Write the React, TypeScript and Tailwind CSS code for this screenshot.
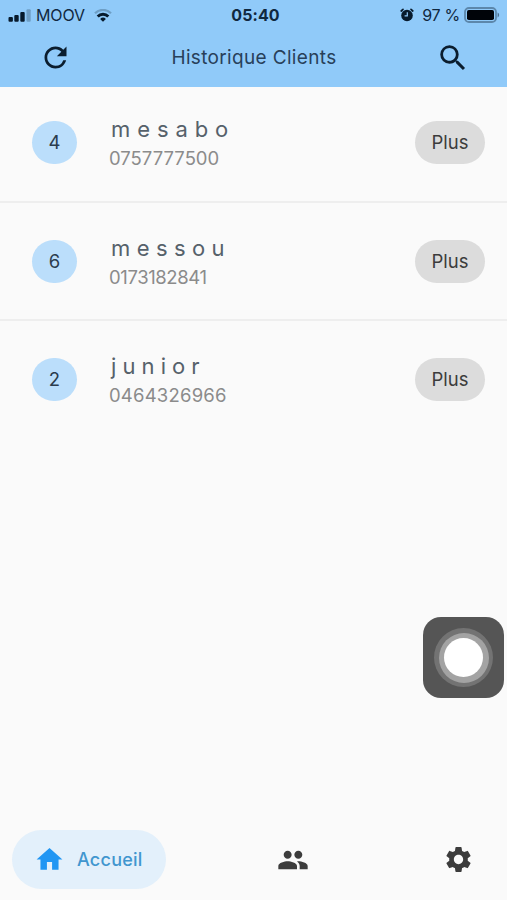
import { MdHome, MdPeople, MdRefresh, MdSearch, MdSettings } from 'react-icons/md';
import { clsx } from 'clsx';

type Client = {
  name: string;
  phone: string;
  count: number;
  nameClass: string;
  phoneClass: string;
};

const clients: Client[] = [
  {
    name: 'mesabo',
    phone: '0757777500',
    count: 4,
    nameClass: 'tracking-[6.9px]',
    phoneClass: 'tracking-[0px]',
  },
  {
    name: 'messou',
    phone: '0173182841',
    count: 6,
    nameClass: 'tracking-[6.4px]',
    phoneClass: 'tracking-[-0.4px]',
  },
  {
    name: 'junior',
    phone: '0464326966',
    count: 2,
    nameClass: 'tracking-[6.1px]',
    phoneClass: 'tracking-[0.2px]',
  },
];

function SignalIcon() {
  return (
    <svg width="23" height="13" viewBox="0 0 23 13" fill="#071a2c" aria-hidden="true">
      <rect x="0.5" y="8" width="4.4" height="4.8" rx="1" />
      <rect x="6.3" y="6" width="4.4" height="6.8" rx="1" />
      <rect x="12.3" y="3" width="4.4" height="9.8" rx="1" />
      <rect x="18.5" y="0.3" width="4.2" height="12.5" rx="1" opacity="0.25" />
    </svg>
  );
}

function WifiIcon() {
  return (
    <svg width="18" height="13" viewBox="0 0 18 13" aria-hidden="true">
      <path d="M9 12.8 6.1 9.9a4.1 4.1 0 0 1 5.8 0Z" fill="#071a2c" />
      <path d="M3.7 7.5a7.4 7.4 0 0 1 10.6 0" fill="none" stroke="#071a2c" strokeWidth="2.9" />
      <path d="M1 4.2a11.4 11.4 0 0 1 16 0" fill="none" stroke="#071a2c" strokeWidth="2.2" opacity="0.25" />
    </svg>
  );
}

function AlarmIcon() {
  return (
    <svg width="14" height="14" viewBox="0 0 14 14" aria-hidden="true">
      <circle cx="7" cy="7.5" r="5.8" fill="#071a2c" />
      <path
        d="M1.2 3 3 1.4M12.8 3 11 1.4"
        stroke="#071a2c"
        strokeWidth="1.7"
        strokeLinecap="round"
      />
      <path d="M7.3 4.3v3.6H4.6" fill="none" stroke="#8fc8f8" strokeWidth="1.2" />
    </svg>
  );
}

function BatteryIcon() {
  return (
    <svg width="36" height="16" viewBox="0 0 36 16" aria-hidden="true">
      <rect x="1" y="1" width="31" height="14" rx="4" fill="none" stroke="#071a2c" strokeWidth="1.8" opacity="0.38" />
      <rect x="3" y="3" width="27" height="10" rx="1.8" fill="#000409" />
      <path d="M33.6 5.6c2 .8 2 4 0 4.8Z" fill="#071a2c" opacity="0.5" />
    </svg>
  );
}

function StatusBar() {
  return (
    <div className="grid h-[30px] grid-cols-[1fr_auto_1fr] items-center pr-[7px] pl-2 text-[#10283f]">
      <div className="flex items-center">
        <SignalIcon />
        <span className="ml-[5px] text-base tracking-[-0.1px]">MOOV</span>
        <span className="ml-[9px]">
          <WifiIcon />
        </span>
      </div>
      <span className="pl-[3px] text-base font-bold tracking-[0.1px]">05:40</span>
      <div className="flex items-center justify-end">
        <AlarmIcon />
        <span className="mr-1 ml-2 text-base tracking-[-0.3px]">97 %</span>
        <BatteryIcon />
      </div>
    </div>
  );
}

function Header() {
  return (
    <header className="h-[87px] shrink-0 bg-[#90caf9]">
      <StatusBar />
      <div className="flex h-[55px] items-center justify-between pr-[37px] pl-[39px]">
        <button type="button" aria-label="Actualiser" className="text-[#0b1d2e]">
          <MdRefresh className="size-[33px]" />
        </button>
        <h1 className="pt-px text-[19px] font-normal tracking-[0.34px] text-[#28405a]">Historique Clients</h1>
        <button type="button" aria-label="Rechercher" className="text-[#0b1d2e]">
          <MdSearch className="size-[34px]" />
        </button>
      </div>
    </header>
  );
}

function ClientRow({ client, first, last }: { client: Client; first: boolean; last: boolean }) {
  return (
    <li
      className={clsx(
        'flex items-start pr-[22px] pl-8',
        first ? 'h-[116px] pt-[34px]' : 'h-[118px] pt-[37px]',
        !last && 'border-b-2 border-[#eeeeee]',
      )}
    >
      <span className="flex h-[43px] w-[45px] items-center justify-center rounded-full bg-[#bbdefb] text-[18.5px] text-[#2b3c4d]">
        {client.count}
      </span>
      <div className="-mt-[5px] ml-8 flex-1">
        <p className={clsx('pl-0.5 text-[22px] leading-[26px] text-[#56616a]', client.nameClass)}>{client.name}</p>
        <p className={clsx('mt-[4px] text-[18.5px] leading-6 text-[#8b8b8b]', client.phoneClass)}>{client.phone}</p>
      </div>
      <button type="button" className="h-[43px] w-[70px] rounded-full bg-[#dcdcdc] text-[18.5px] text-[#3c3c3c]">
        Plus
      </button>
    </li>
  );
}

function AssistiveButton() {
  return (
    <button
      type="button"
      aria-label="AssistiveTouch"
      className="absolute top-[617px] right-[3px] flex size-[81px] items-center justify-center rounded-[18px] bg-[#555555]"
    >
      <span className="flex size-[59px] items-center justify-center rounded-full bg-[#737373]">
        <span className="flex size-[50px] items-center justify-center rounded-full bg-[#a3a3a3]">
          <span className="size-[39px] rounded-full bg-white" />
        </span>
      </span>
    </button>
  );
}

function BottomNav() {
  return (
    <nav className="flex h-[81px] shrink-0 items-start pr-[33px] pl-3 text-[#3c3c3c]">
      <a href="#" className="mt-[11px] flex h-[59px] w-[154px] items-center rounded-full bg-[#e3f0fb] pl-[22px]">
        <MdHome className="size-[31px] text-[#2196f3]" />
        <span className="ml-3 text-[18px] font-medium tracking-[0.25px] text-[#4196cf]">Accueil</span>
      </a>
      <a href="#" aria-label="Clients" className="mt-[25px] ml-[111px]">
        <MdPeople className="size-8" />
      </a>
      <a href="#" aria-label="Paramètres" className="mt-[25px] ml-auto">
        <MdSettings className="size-[31px]" />
      </a>
    </nav>
  );
}

export default function App() {
  return (
    <div className="relative flex h-[900px] w-[507px] flex-col overflow-hidden bg-[#fafafa] font-['Inter',sans-serif]">
      <Header />
      <ul className="flex-1">
        {clients.map((client, i) => (
          <ClientRow key={client.name} client={client} first={i === 0} last={i === clients.length - 1} />
        ))}
      </ul>
      <BottomNav />
      <AssistiveButton />
    </div>
  );
}
